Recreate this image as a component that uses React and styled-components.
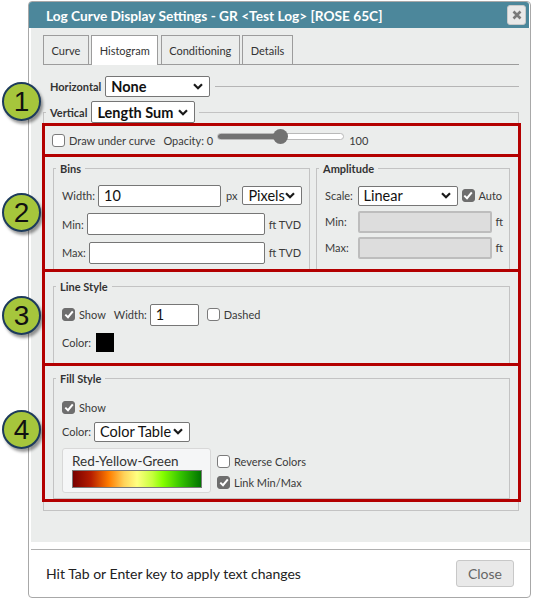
import React from "react";
import styled, { createGlobalStyle } from "styled-components";

const GlobalStyle = createGlobalStyle`
  body {
    margin: 0;
    background: #fff;
    font-family: Lato, "Open Sans", "Liberation Sans", sans-serif;
    color: #333;
  }
  * { box-sizing: border-box; }
`;

const Page = styled.div`
  position: relative;
  width: 534px;
  height: 599px;
  padding: 1px 3px 0 28px;
`;

const Dialog = styled.div`
  height: 597px;
  border: 1px solid #a8a8a8;
  border-radius: 4px;
  display: flex;
  flex-direction: column;
  background: #fff;
`;

const TitleBar = styled.div`
  height: 26px;
  flex-shrink: 0;
  margin-right: 1px;
  background: #4c879b;
  border-radius: 3px 3px 0 0;
  display: flex;
  align-items: center;
  justify-content: space-between;
  padding: 0 3px 0 17px;
  color: #fff;
  font-size: 13.7px;
  font-weight: 700;
  white-space: nowrap;
`;

const CloseX = styled.button`
  width: 19px;
  height: 20px;
  padding: 0;
  border: 1px solid #c9c9c9;
  border-radius: 3px;
  background: #e9e9e9;
  display: flex;
  align-items: center;
  justify-content: center;
`;

const Body = styled.div`
  flex: 1;
  margin-left: 2px;
  background: #ebedec;
  padding: 7px 11px 0 12px;
`;

const TabBar = styled.div`
  display: flex;
  align-items: flex-end;
  gap: 2.5px;
  height: 30px;
  border-bottom: 1px solid #9c9c9c;
`;

const Tab = styled.div`
  height: ${(p) => (p.$active ? "30px" : "29px")};
  margin-bottom: ${(p) => (p.$active ? "-1px" : "0")};
  padding: 0 7.5px;
  display: flex;
  align-items: center;
  border: 1px solid #9c9c9c;
  border-bottom: none;
  background: ${(p) => (p.$active ? "#fff" : "transparent")};
  font-size: 11px;
  color: #333;
`;

const AxisRow = styled.div`
  display: flex;
  align-items: center;
  height: 21px;
  margin-top: 11px;
  padding-left: 7px;
`;

const AxisLabel = styled.span`
  font-size: 11px;
  font-weight: 700;
  color: #333;
  margin-right: 4px;
`;

const Rule = styled.div`
  flex: 1;
  height: 1px;
  margin-left: 5px;
  background: #b5b5b5;
`;

const SelectBox = styled.div`
  width: ${(p) => p.$w}px;
  height: ${(p) => p.$h || 20}px;
  flex-shrink: 0;
  margin-left: ${(p) => p.$ml || 0}px;
  display: flex;
  align-items: center;
  justify-content: space-between;
  padding: 0 6px 0 5px;
  background: #fff;
  border: 1px solid #767676;
  border-radius: 2px;
  font-size: 14.5px;
  font-weight: ${(p) => (p.$bold ? 700 : 400)};
  color: #111;
  white-space: nowrap;
`;

const Group = styled.fieldset`
  margin: 4px 0 0;
  padding: 0 0 8px;
  min-width: 0;
  border: 1px solid #c3c3c3;
`;

const Legend = styled.legend`
  margin-left: ${(p) => (p.$inset ? "-6px" : "2px")};
  padding: 0 4px;
  font-size: 11px;
  font-weight: 700;
  line-height: 15px;
  color: #333;
`;

const LegendInner = styled.span`
  display: inline-flex;
  align-items: center;
`;

const Highlight = styled.div`
  margin: ${(p) => (p.$first ? "0" : "-3px")} -3px 0 -2px;
  height: ${(p) => p.$h}px;
  border: 3px solid #b30000;
  padding: ${(p) => p.$pad || "0"};
`;

const InlineRow = styled.div`
  display: flex;
  align-items: ${(p) => (p.$top ? "flex-start" : "center")};
  height: ${(p) => p.$h || 22}px;
  margin-top: ${(p) => p.$mt || 0}px;
  padding-left: ${(p) => p.$pl || 0}px;
`;

const Columns = styled.div`
  display: grid;
  grid-template-columns: 257px 1fr;
  gap: 6px;
  height: 100%;
  padding: 4px 8px 0 8px;
`;

const Panel = styled.fieldset`
  margin: 0;
  min-width: 0;
  padding: 0 8px ${(p) => (p.$open ? "0" : "5px")};
  border: 1px solid #c3c3c3;
  border-bottom: ${(p) => (p.$open ? "none" : "1px solid #c3c3c3")};
  height: ${(p) => (p.$open ? "100%" : "auto")};
`;

const Stack = styled.div`
  display: flex;
  flex-direction: column;
  gap: ${(p) => p.$gap}px;
  margin-top: ${(p) => p.$mt}px;
`;

const Text = styled.span`
  font-size: 11px;
  color: #3a3a3a;
  white-space: nowrap;
  margin-left: ${(p) => p.$ml || 0}px;
  margin-right: ${(p) => p.$mr || 0}px;
  width: ${(p) => (p.$w ? `${p.$w}px` : "auto")};
  flex-shrink: 0;
`;

const Field = styled.input`
  width: ${(p) => (p.$w ? `${p.$w}px` : "auto")};
  flex: ${(p) => (p.$w ? "none" : "1")};
  min-width: 0;
  height: 22px;
  margin: 0;
  padding: 0 5px;
  border: ${(p) => (p.disabled ? "2px solid #bdbdbd" : "1px solid #767676")};
  border-radius: 2px;
  background: ${(p) => (p.disabled ? "#dddddd" : "#fff")};
  font-family: inherit;
  font-size: 14.5px;
  color: #111;
  outline: none;
`;

const Box = styled.span`
  width: 13px;
  height: 13px;
  flex-shrink: 0;
  margin-left: ${(p) => p.$ml || 0}px;
  border-radius: 3px;
  border: 1px solid ${(p) => (p.$on ? "#6e6e6e" : "#7b7b7b")};
  background: ${(p) => (p.$on ? "#6e6e6e" : "#fff")};
  display: flex;
  align-items: center;
  justify-content: center;
`;

const Track = styled.div`
  position: relative;
  width: 127px;
  height: 7px;
  margin: -8px 0 0 4px;
  border: 1px solid #b9b9b9;
  border-radius: 4px;
  background: #fff;
`;

const TrackFill = styled.div`
  height: 100%;
  border-radius: 4px 0 0 4px;
  background: #727272;
`;

const Thumb = styled.div`
  position: absolute;
  top: 50%;
  width: 15px;
  height: 15px;
  margin: -7.5px 0 0 -7.5px;
  border-radius: 50%;
  background: #727272;
`;

const Swatch = styled.div`
  width: 18px;
  height: 19px;
  margin-left: 2px;
  background: ${(p) => p.$color};
`;

const RampCard = styled.div`
  width: 149px;
  height: 45px;
  padding: 4px 9px 0;
  border: 1px solid #d8d8d8;
  border-radius: 3px;
  background: #f5f6f7;
`;

const RampName = styled.div`
  font-size: 13.5px;
  line-height: 16px;
  color: #333;
`;

const RampBar = styled.div`
  width: 130px;
  height: 18px;
  margin-top: 1px;
  border: 1px solid #7a7a7a;
  background: linear-gradient(
    to right,
    #780000 0%,
    #b51d00 14%,
    #ff7d00 28%,
    #ffd35a 40%,
    #ffff80 50%,
    #c6ff3c 62%,
    #86ff00 70%,
    #35c400 84%,
    #007400 100%
  );
`;

const RampOptions = styled.div`
  display: flex;
  flex-direction: column;
  gap: 6px;
  margin-left: 6px;
  padding-top: 6px;
`;

const Footer = styled.div`
  height: 48px;
  flex-shrink: 0;
  margin: 7px 0 0 2px;
  border-top: 1px solid #b0b0b0;
  display: flex;
  align-items: center;
  justify-content: space-between;
  padding: 0 16px 0 15px;
  font-size: 14px;
  color: #222;
`;

const CloseButton = styled.button`
  width: 58px;
  height: 27px;
  border: 1px solid #c8c8c8;
  border-radius: 3px;
  background: #e9e9e9;
  font-family: inherit;
  font-size: 14px;
  color: #666;
`;

const Badge = styled.div`
  position: absolute;
  left: ${(p) => p.$x}px;
  top: ${(p) => p.$y}px;
  width: 39px;
  height: 39px;
  border-radius: 50%;
  background: #a6c63c;
  border: 2px solid #1d3b5c;
  box-shadow: 2px 3px 3px rgba(0, 0, 0, 0.4);
  display: flex;
  align-items: center;
  justify-content: center;
  font-family: "Liberation Sans", Arial, sans-serif;
  font-size: 28px;
  color: #111;
`;

const Chevron = () => (
  <svg width="10" height="7" viewBox="0 0 10 7">
    <polyline points="1,1.2 5,5.2 9,1.2" fill="none" stroke="#1a1a1a" strokeWidth="2.2" />
  </svg>
);

const Tick = () => (
  <svg width="10" height="9" viewBox="0 0 10 9">
    <polyline points="1.3,4.6 4,7.2 8.8,1.4" fill="none" stroke="#fff" strokeWidth="2" />
  </svg>
);

const Select = ({ value, ...rest }) => (
  <SelectBox {...rest}>
    <span>{value}</span>
    <Chevron />
  </SelectBox>
);

const Checkbox = ({ on, label, ml }) => (
  <>
    <Box $on={on} $ml={ml}>{on && <Tick />}</Box>
    {label && <Text $ml={4}>{label}</Text>}
  </>
);

const tabs = ["Curve", "Histogram", "Conditioning", "Details"];

export default function App() {
  const opacity = 50;
  return (
    <Page>
      <GlobalStyle />
      <Dialog>
        <TitleBar>
          <span>Log Curve Display Settings - GR &lt;Test Log&gt; [ROSE 65C]</span>
          <CloseX aria-label="close">
            <svg width="10" height="10" viewBox="0 0 10 10">
              <path d="M1.5 1.5 L8.5 8.5 M8.5 1.5 L1.5 8.5" stroke="#7a7a7a" strokeWidth="2.6" />
            </svg>
          </CloseX>
        </TitleBar>

        <Body>
          <TabBar>
            {tabs.map((t) => (
              <Tab key={t} $active={t === "Histogram"}>{t}</Tab>
            ))}
          </TabBar>

          <AxisRow>
            <AxisLabel>Horizontal</AxisLabel>
            <Select value="None" $w={105} $h={21} $bold />
            <Rule />
          </AxisRow>

          <Group>
            <Legend>
              <LegendInner>
                <AxisLabel>Vertical</AxisLabel>
                <Select value="Length Sum" $w={104} $h={22} $bold />
              </LegendInner>
            </Legend>

            <Highlight $first $h={34}>
              <InlineRow $h={28} $pl={7}>
                <Checkbox label="Draw under curve" />
                <Text $ml={8}>Opacity: 0</Text>
                <Track>
                  <TrackFill style={{ width: `${opacity}%` }} />
                  <Thumb style={{ left: `${opacity}%` }} />
                </Track>
                <Text $ml={5}>100</Text>
              </InlineRow>
            </Highlight>

            <Highlight $h={118}>
              <Columns>
                <Panel $open>
                  <Legend $inset>Bins</Legend>
                  <Stack $gap={6.5} $mt={8.5}>
                    <InlineRow>
                      <Text $mr={3}>Width:</Text>
                      <Field $w={123} defaultValue="10" readOnly />
                      <Text $ml={5}>px</Text>
                      <Select value="Pixels" $w={60} $h={19} $ml={5} />
                    </InlineRow>
                    <InlineRow>
                      <Text $mr={3}>Min:</Text>
                      <Field readOnly />
                      <Text $ml={4}>ft TVD</Text>
                    </InlineRow>
                    <InlineRow>
                      <Text $mr={3}>Max:</Text>
                      <Field readOnly />
                      <Text $ml={4}>ft TVD</Text>
                    </InlineRow>
                  </Stack>
                </Panel>
                <Panel $open>
                  <Legend $inset>Amplitude</Legend>
                  <Stack $gap={4} $mt={8.5}>
                    <InlineRow>
                      <Text $w={32.5}>Scale:</Text>
                      <Select value="Linear" $w={100} $h={20} />
                      <Checkbox on label="Auto" ml={4} />
                    </InlineRow>
                    <InlineRow>
                      <Text $w={32.5}>Min:</Text>
                      <Field $w={134} disabled />
                      <Text $ml={4}>ft</Text>
                    </InlineRow>
                    <InlineRow>
                      <Text $w={32.5}>Max:</Text>
                      <Field $w={134} disabled />
                      <Text $ml={4}>ft</Text>
                    </InlineRow>
                  </Stack>
                </Panel>
              </Columns>
            </Highlight>

            <Highlight $h={97} $pad="7px 8px 0 8px">
              <Panel $open>
                <Legend $inset>Line Style</Legend>
                <InlineRow $h={23} $mt={9}>
                  <Checkbox on label="Show" />
                  <Text $ml={8} $mr={3}>Width:</Text>
                  <Field $w={49} defaultValue="1" readOnly />
                  <Checkbox label="Dashed" ml={8} />
                </InlineRow>
                <InlineRow $h={19} $mt={7}>
                  <Text $mr={3}>Color:</Text>
                  <Swatch $color="#000" />
                </InlineRow>
              </Panel>
            </Highlight>

            <Highlight $h={138.5} $pad="5px 8px 0 8px">
              <Panel>
                <Legend $inset>Fill Style</Legend>
                <InlineRow $h={16} $mt={13.5}>
                  <Checkbox on label="Show" />
                </InlineRow>
                <InlineRow $h={20} $mt={6}>
                  <Text $mr={3}>Color:</Text>
                  <Select value="Color Table" $w={96} $h={20} />
                </InlineRow>
                <InlineRow $h={45} $mt={6} $top>
                  <RampCard>
                    <RampName>Red-Yellow-Green</RampName>
                    <RampBar />
                  </RampCard>
                  <RampOptions>
                    <InlineRow $h={15}>
                      <Checkbox label="Reverse Colors" />
                    </InlineRow>
                    <InlineRow $h={15}>
                      <Checkbox on label="Link Min/Max" />
                    </InlineRow>
                  </RampOptions>
                </InlineRow>
              </Panel>
            </Highlight>
          </Group>
        </Body>

        <Footer>
          <span>Hit Tab or Enter key to apply text changes</span>
          <CloseButton>Close</CloseButton>
        </Footer>
      </Dialog>

      <Badge $x={2} $y={82}>1</Badge>
      <Badge $x={2} $y={193}>2</Badge>
      <Badge $x={2} $y={296}>3</Badge>
      <Badge $x={2} $y={410}>4</Badge>
    </Page>
  );
}
